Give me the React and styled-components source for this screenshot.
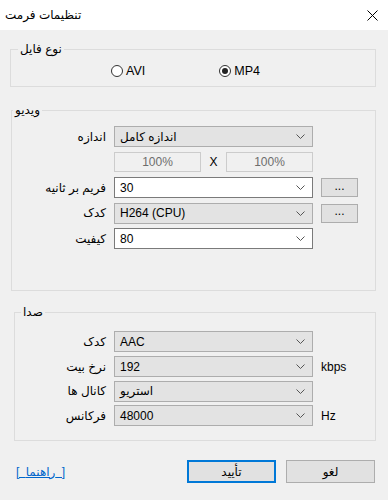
import React from 'react';
import styled, { createGlobalStyle } from 'styled-components';

const GlobalStyle = createGlobalStyle`
  html, body {
    margin: 0;
    padding: 0;
    background: #f0f0f0;
  }
  body {
    font-family: "Liberation Sans", "DejaVu Sans", sans-serif;
    font-size: 12px;
    color: #000;
  }
  * {
    box-sizing: border-box;
  }
`;

// Window frame
const Window = styled.div`
  width: 388px;
  height: 500px;
  background: #f0f0f0;
  display: flex;
  flex-direction: column;
`;

const TitleBar = styled.div`
  height: 30px;
  flex: none;
  background: #fff;
  display: flex;
  align-items: center;
  justify-content: space-between;
  padding: 0 10px 0 5px;
`;

const Title = styled.span`
  font-size: 12px;
`;

const CloseButton = styled.button`
  border: 0;
  background: none;
  padding: 0;
  width: 11px;
  height: 11px;
  display: flex;
  cursor: pointer;
`;

const Body = styled.div`
  flex: 1;
  display: flex;
  flex-direction: column;
  padding: 12px 12px 0 10px;
`;

// Group boxes
const Group = styled.fieldset`
  margin: ${p => p.$top || 0}px 0 0 ${p => p.$inset || 0}px;
  border: 1px solid #dcdcdc;
  padding: ${p => p.$pad};
  min-inline-size: 0;
`;

const Legend = styled.legend`
  padding: 0 2px;
  margin-left: ${p => p.$offset}px;
  line-height: 14px;
  font-size: 12px;
`;

// Radio buttons
const RadioRow = styled.div`
  display: flex;
  align-items: center;
  height: 16px;
  padding-left: 100px;
  gap: 74px;
`;

const Radio = styled.label`
  display: flex;
  align-items: center;
  gap: 3px;
  font-size: 12.5px;
`;

const Circle = styled.span`
  width: 12px;
  height: 12px;
  border-radius: 50%;
  border: 1px solid #333;
  background: #fff;
  display: flex;
  align-items: center;
  justify-content: center;

  &::after {
    content: '';
    width: 6px;
    height: 6px;
    border-radius: 50%;
    background: ${p => (p.$checked ? '#222' : 'transparent')};
  }
`;

// Form grid
const Form = styled.div`
  display: grid;
  grid-template-columns: ${p => p.$labelWidth}px 199px auto;
  grid-auto-rows: 21px;
  column-gap: 8px;
  row-gap: ${p => p.$rowGap}px;
  align-items: center;
`;

const Label = styled.span`
  grid-column: 1;
  text-align: right;
  direction: rtl;
  white-space: nowrap;
`;

const Combo = styled.div`
  grid-column: 2;
  height: 21px;
  display: flex;
  align-items: center;
  justify-content: space-between;
  padding: 0 7px 0 5px;
  background: ${p => (p.$editable ? '#fff' : '#e3e3e3')};
  border: 1px solid ${p => (p.$editable ? '#7a7a7a' : '#adadad')};
  white-space: nowrap;
`;

const SizeInputs = styled.div`
  grid-column: 2;
  display: flex;
  align-items: center;
  justify-content: space-between;
  height: 20px;
`;

const DisabledInput = styled.div`
  width: 87px;
  height: 20px;
  border: 1px solid #cccccc;
  background: #f0f0f0;
  color: #6d6d6d;
  display: flex;
  align-items: center;
  justify-content: center;
`;

const Times = styled.span`
  font-size: 12px;
`;

const DotsButton = styled.button`
  grid-column: 3;
  justify-self: start;
  width: 37px;
  height: 19px;
  padding: 0 0 4px;
  background: #e1e1e1;
  border: 1px solid #adadad;
  font-family: inherit;
  font-size: 12px;
  line-height: 1;
  color: #000;
`;

const Unit = styled.span`
  grid-column: 3;
`;

// Footer
const Footer = styled.div`
  margin-top: 19px;
  display: flex;
  align-items: center;
  height: 23px;
`;

const HelpLink = styled.a`
  margin-left: 6px;
  color: #0066cc;
  text-decoration: underline;
  word-spacing: 3px;
  cursor: pointer;
`;

const Buttons = styled.div`
  margin-left: auto;
  margin-right: 1px;
  display: flex;
  gap: 10px;
`;

const DialogButton = styled.button`
  width: 89px;
  height: 23px;
  padding: 0;
  background: #e1e1e1;
  border: ${p => (p.$default ? '2px solid #0078d7' : '1px solid #adadad')};
  font-family: inherit;
  font-size: 12px;
  color: #000;
`;

const Chevron = () => (
  <svg width="9" height="5" viewBox="0 0 9 5">
    <path d="M0.5 0.5 L4.5 4.5 L8.5 0.5" fill="none" stroke="#555" strokeWidth="1" />
  </svg>
);

const Select = ({ value, editable }) => (
  <Combo $editable={editable}>
    <span>{value}</span>
    <Chevron />
  </Combo>
);

const App = () => {
  return (
    <>
      <GlobalStyle />
      <Window>
        <TitleBar>
          <Title>تنظیمات فرمت</Title>
          <CloseButton aria-label="close">
            <svg width="11" height="11" viewBox="0 0 11 11">
              <path d="M0.5 0.5 L10.5 10.5 M10.5 0.5 L0.5 10.5" stroke="#000" strokeWidth="1" />
            </svg>
          </CloseButton>
        </TitleBar>
        <Body>
          <Group $pad="7px 0 7px 0">
            <Legend $offset={7}>نوع فایل</Legend>
            <RadioRow>
              <Radio><Circle />AVI</Radio>
              <Radio><Circle $checked />MP4</Radio>
            </RadioRow>
          </Group>

          <Group $top={16} $inset={1} $pad="9px 0 41px 0">
            <Legend $offset={1}>ویدیو</Legend>
            <Form $labelWidth={94} $rowGap={4.6}>
              <Label>اندازه</Label>
              <Select value="اندازه کامل" />
              <SizeInputs>
                <DisabledInput>100%</DisabledInput>
                <Times>X</Times>
                <DisabledInput>100%</DisabledInput>
              </SizeInputs>
              <Label>فریم بر ثانیه</Label>
              <Select value="30" editable />
              <DotsButton>...</DotsButton>
              <Label>کدک</Label>
              <Select value="H264 (CPU)" />
              <DotsButton>...</DotsButton>
              <Label>کیفیت</Label>
              <Select value="80" editable />
            </Form>
          </Group>

          <Group $top={14} $inset={4} $pad="12px 0 14px 0">
            <Legend $offset={6}>صدا</Legend>
            <Form $labelWidth={91} $rowGap={3.67}>
              <Label>کدک</Label>
              <Select value="AAC" />
              <Label>نرخ بیت</Label>
              <Select value="192" />
              <Unit>kbps</Unit>
              <Label>کانال ها</Label>
              <Select value="استریو" />
              <Label>فرکانس</Label>
              <Select value="48000" />
              <Unit>Hz</Unit>
            </Form>
          </Group>

          <Footer>
            <HelpLink>[ راهنما ]</HelpLink>
            <Buttons>
              <DialogButton $default>تأیید</DialogButton>
              <DialogButton>لغو</DialogButton>
            </Buttons>
          </Footer>
        </Body>
      </Window>
    </>
  );
};

export default App;
